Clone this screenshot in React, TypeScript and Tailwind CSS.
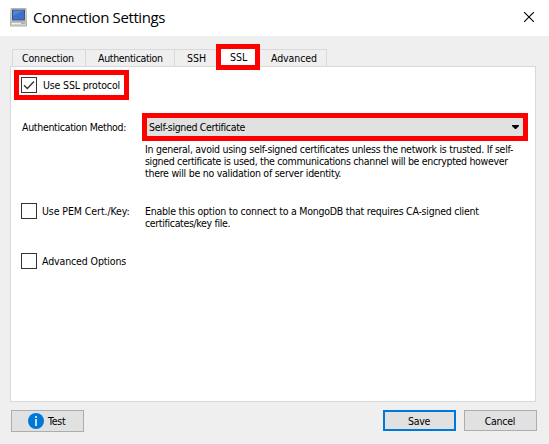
import type { ReactNode } from "react";

function Checkbox({ checked = false }: { checked?: boolean }) {
  return (
    <span className="flex size-4 shrink-0 items-center justify-center border border-[#333] bg-white">
      {checked && (
        <svg width="14" height="14" viewBox="0 0 14 14" fill="none" stroke="#333" strokeWidth="1.3">
          <path d="M2 7.2 5.3 10.5 12 3.5" />
        </svg>
      )}
    </span>
  );
}

function Tab({ className, children }: { className: string; children: ReactNode }) {
  return (
    <div className={`h-[17px] border-t border-r border-[#d9d9d9] pt-[2px] ${className}`}>{children}</div>
  );
}

function ComputerIcon() {
  return (
    <svg width="18" height="19" viewBox="0 0 18 19">
      <path d="M1 .5h15l.5 13h-16z" fill="#d8d6d4" stroke="#b5b3b0" />
      <path d="M2 1.500h13v11H2z" fill="#375487" />
      <path d="M3 2.500h11v9H3z" fill="#3c70c9" />
      <path d="M3 2.500h11L3 8z" fill="#5283d3" />
      <path d="M.5 14h16v4H.5z" fill="#d3d1ce" stroke="#b0aeab" />
      <path d="M2 15.500h9" stroke="#f0f0f0" />
      <path d="M11 15.500h4" stroke="#aaa" />
    </svg>
  );
}

export default function App() {
  return (
    <div className="flex h-[444px] w-[549px] flex-col overflow-hidden bg-[#efefef] font-['DejaVu_Sans_Condensed','DejaVu_Sans',sans-serif] text-[10.5px] leading-[12px] whitespace-nowrap text-black">
      <header className="flex h-9 shrink-0 items-start bg-white pl-[10px]">
        <div className="pt-2"><ComputerIcon /></div>
        <h1 className="ml-[5px] pt-[5px] font-['Open_Sans','Noto_Sans',sans-serif] text-[15px] leading-[24px] tracking-[-0.38px]">Connection Settings</h1>
        <svg className="mt-3 mr-[15px] ml-auto" width="10" height="10" viewBox="0 0 10 10" stroke="black" strokeWidth="1.1">
          <path d="M0 0 10 10M10 0 0 10" />
        </svg>
      </header>

      <nav className="flex h-[30px] shrink-0 items-end pl-3">
        <Tab className="w-[74px] border-l pl-[9px] tracking-[-0.15px]">Connection</Tab>
        <Tab className="w-[89px] pl-3 tracking-[-0.33px]">Authentication</Tab>
        <Tab className="w-[41px] border-r-0 pl-3">SSH</Tab>
        <div className="z-10 -mb-[4px] h-[26px] w-11 border-5 border-[#ff0000] bg-white pt-[2px] pl-[9px]">SSL</div>
        <Tab className="w-[67px] pl-[11px] tracking-[-0.1px]">Advanced</Tab>
      </nav>

      <main className="ml-[10px] h-[336px] w-[526px] shrink-0 border border-[#d9d9d9] bg-white pt-[3px] pl-[3px]">
        <div className="flex h-[30px] w-[115px] items-center gap-[6px] border-5 border-[#ff0000] pl-[2px]">
          <Checkbox checked />
          <span className="tracking-[-0.15px]">Use SSL protocol</span>
        </div>
        <div className="mt-[13px] flex">
          <span className="w-[128px] pt-2 pl-2 tracking-[-0.31px]">Authentication Method:</span>
          <div className="flex h-7 w-[386px] items-center justify-between border-5 border-[#ff0000] bg-[#e1e1e1] pr-1 pl-[2px]">
            <span className="-mt-px tracking-[-0.35px]">Self-signed Certificate</span>
            <svg width="7" height="4" viewBox="0 0 7 4"><path d="M0 0h7v1L4 4H3L0 1z" /></svg>
          </div>
        </div>
        <div className="mt-[2px] ml-[131px]">
          <p className="tracking-[-0.28px]">In general, avoid using self-signed certificates unless the network is trusted. If self-</p>
          <p className="tracking-[-0.33px]">signed certificate is used, the communications channel will be encrypted however</p>
          <p className="tracking-[-0.26px]">there will be no validation of server identity.</p>
        </div>
        <div className="mt-6 flex pl-[7px]">
          <Checkbox />
          <span className="ml-[5px] w-[103px] pt-[2px] tracking-[-0.08px]">Use PEM Cert./Key:</span>
          <div className="pt-[2px] tracking-[-0.24px]">
            <p>Enable this option to connect to a MongoDB that requires CA-signed client</p>
            <p className="tracking-[-0.34px]">certificates/key file.</p>
          </div>
        </div>
        <div className="mt-6 flex pl-[7px]">
          <Checkbox />
          <span className="ml-[5px] pt-[2px] tracking-[-0.12px]">Advanced Options</span>
        </div>
      </main>

      <footer className="flex pt-2 pl-[11px] tracking-[-0.25px]">
        <button className="flex h-[22px] w-[73px] items-center border border-[#adadad] bg-[#e1e1e1] pl-4">
          <svg width="16" height="16" viewBox="0 0 16 16">
            <circle cx="8" cy="8" r="8" fill="#0078d7" />
            <path d="M8 3v2M8 6v7" stroke="white" strokeWidth="1.500" />
          </svg>
          <span className="ml-1">Test</span>
        </button>
        <button className="ml-[299px] flex h-[21px] w-[73px] items-center justify-center border-2 border-[#0078d7] bg-[#e1e1e1] pr-px">Save</button>
        <button className="ml-2 flex h-[21px] w-[73px] items-center justify-center border border-[#adadad] bg-[#e1e1e1] pr-px">Cancel</button>
      </footer>
    </div>
  );
}
